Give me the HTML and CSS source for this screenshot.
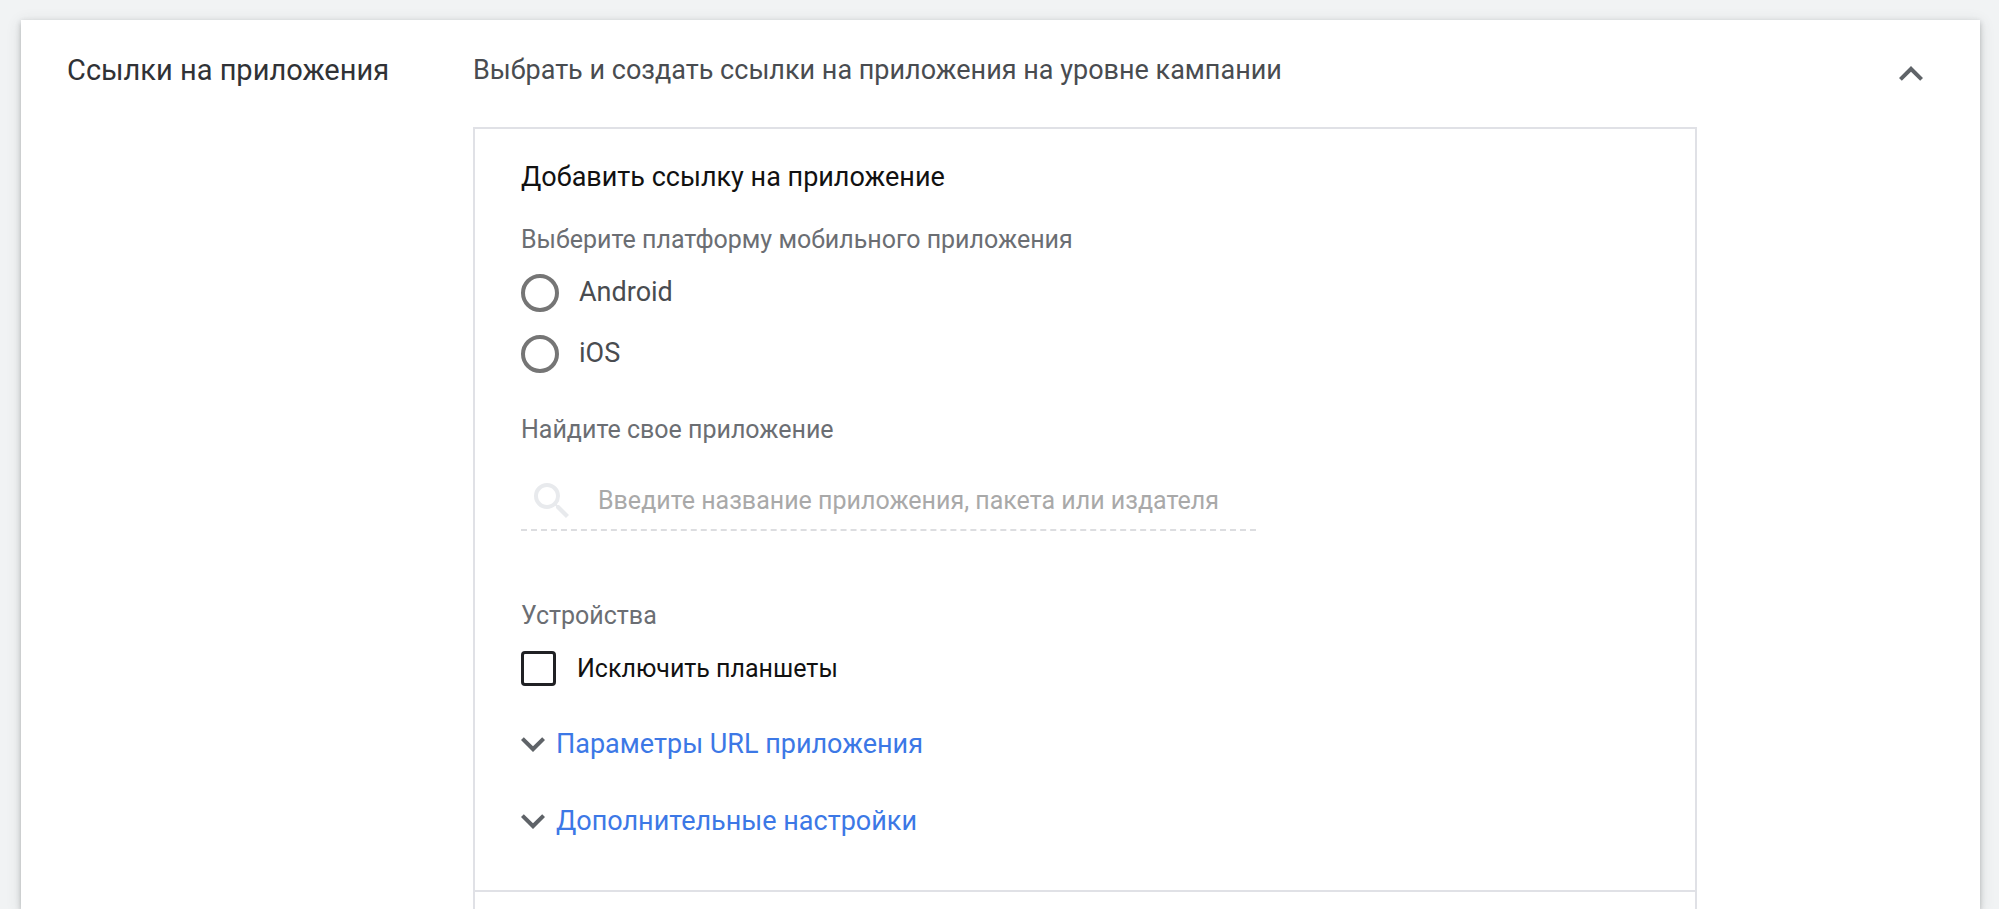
FILE: index.html
```html
<!DOCTYPE html>
<html lang="ru">

<head>
  <meta charset="UTF-8">
  <meta name="viewport" content="width=device-width, initial-scale=1.0">
  <title>Ссылки на приложения</title>
  <link rel="stylesheet" href="styles.css">
</head>

<body>
  <main class="card">
    <h2 class="card-title">Ссылки на приложения</h2>
    <div class="content">
      <p class="summary">Выбрать и создать ссылки на приложения на уровне кампании</p>
      <form class="panel">
        <section class="panel-main">
          <h3>Добавить ссылку на приложение</h3>

          <fieldset class="platforms">
            <legend class="caption">Выберите платформу мобильного приложения</legend>
            <label class="option"><input type="radio" name="platform" value="android"><span>Android</span></label>
            <label class="option"><input type="radio" name="platform" value="ios"><span>iOS</span></label>
          </fieldset>

          <label class="caption" for="app">Найдите свое приложение</label>
          <div class="search">
            <svg class="search-icon" viewBox="0 0 24 24">
              <path d="M15.5 14h-.79l-.28-.27A6.471 6.471 0 0 0 16 9.5 6.5 6.5 0 1 0 9.5 16c1.61 0 3.09-.59 4.23-1.57l.27.28v.79l5 4.99L20.49 19l-4.99-5zm-6 0C7.01 14 5 11.99 5 9.5S7.01 5 9.5 5 14 7.01 14 9.5 11.99 14 9.5 14z" />
            </svg>
            <input id="app" type="text" placeholder="Введите название приложения, пакета или издателя" disabled>
          </div>

          <fieldset class="devices">
            <legend class="caption">Устройства</legend>
            <label class="check"><input type="checkbox" name="tablets"><span>Исключить планшеты</span></label>
          </fieldset>

          <button class="expander" type="button">
            <svg class="chevron" viewBox="6 8 12 8">
              <path d="M16.59 8.59L12 13.17 7.41 8.59 6 10l6 6 6-6z" />
            </svg>
            Параметры URL приложения
          </button>
          <button class="expander" type="button">
            <svg class="chevron" viewBox="6 8 12 8">
              <path d="M16.59 8.59L12 13.17 7.41 8.59 6 10l6 6 6-6z" />
            </svg>
            Дополнительные настройки
          </button>
        </section>
      </form>
    </div>
    <button class="collapse" type="button" aria-label="Свернуть">
      <svg class="chevron" viewBox="6 8 12 8">
        <path d="M12 8l-6 6 1.41 1.41L12 10.83l4.59 4.58L18 14z" />
      </svg>
    </button>
  </main>
</body>

</html>
```

FILE: styles.css
```css
* {
  box-sizing: border-box;
}

body {
  display: flex;
  min-height: 100vh;
  margin: 0;
  padding: 20px 19px 0 21px;
  background: #f1f3f4;
  color: #494c50;
  font-family: Roboto, sans-serif;
  font-size: 27px;
  line-height: 32px;
}

h2,
h3,
p,
fieldset,
legend {
  margin: 0;
  padding: 0;
  border: 0;
  font-size: 27px;
  font-weight: 400;
}

input,
button {
  margin: 0;
  padding: 0;
  border: 0;
  background: none;
  font: inherit;
}

.card {
  flex: 1;
  display: grid;
  grid-template-columns: 406px 1fr 24px;
  padding: 34px 57px 0 46px;
  background: #fff;
  box-shadow: 0 2px 5px rgba(60, 64, 67, .3), 0 3px 14px rgba(60, 64, 67, .15);
}

.card-title {
  color: #303236;
  font-size: 29px;
}

.content {
  display: flex;
  flex-direction: column;
  margin-right: 202px;
}

.panel {
  flex: 1;
  margin-top: 41px;
  border: 2px solid #e0e1e6;
  border-bottom: 0;
}

.panel-main {
  padding: 32px 46px 53px;
  border-bottom: 2px solid #e0e1e6;
}

.panel h3 {
  margin-bottom: 31px;
  color: #111;
}

.caption {
  display: block;
  color: #6b6e73;
  font-size: 25px;
}

.platforms {
  margin-bottom: 18px;
}

.option {
  display: flex;
  align-items: center;
  gap: 20px;
  height: 38px;
  margin-bottom: 23px;
}

.platforms .caption {
  margin-bottom: 18px;
}

.option input {
  appearance: none;
  width: 38px;
  height: 38px;
  border: 4px solid #757575;
  border-radius: 50%;
}

.option span {
  padding-bottom: 2px;
}

.search {
  display: flex;
  align-items: center;
  gap: 22px;
  width: 735px;
  max-width: 100%;
  height: 64px;
  margin: 21px 0 69px;
  padding: 5px 0 0 7px;
  border-bottom: 2px dashed #dcdde0;
}

.search-icon {
  width: 48px;
  height: 48px;
  fill: #e8eaed;
}

.search input {
  flex: 1;
  font-size: 25px;
}

.search input::placeholder {
  color: #a9a9a9;
}

.check {
  display: flex;
  align-items: center;
  gap: 21px;
  margin: 19px 0 42px;
  color: #111;
  font-size: 25px;
}

.check input {
  appearance: none;
  width: 35px;
  height: 35px;
  border: 3px solid #202124;
  border-radius: 4px;
}

.expander {
  display: flex;
  align-items: center;
  gap: 11px;
  margin-bottom: 45px;
  color: #3c78e6;
}

.expander:last-child {
  margin-bottom: 0;
}

.chevron {
  width: 24px;
  height: 16px;
  fill: #5f6368;
}

.collapse {
  display: flex;
  align-items: center;
  height: 40px;
}
```
